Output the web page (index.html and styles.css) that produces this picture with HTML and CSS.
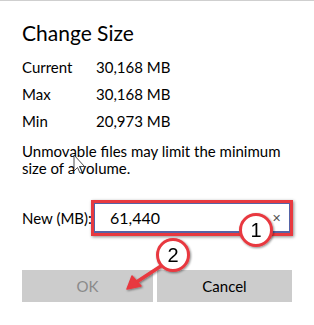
FILE: index.html
```html
<!DOCTYPE html>
<html lang="en">
<head>
    <meta charset="UTF-8">
    <meta name="viewport" content="width=device-width, initial-scale=1.0">
    <title>Change Size</title>
    <link rel="stylesheet" href="styles.css">
</head>
<body>
    <div class="dialog">
        <h2 class="title">Change Size</h2>
        <div class="info">
            <div class="row"><span class="label">Current</span><span>30,168 MB</span></div>
            <div class="row"><span class="label">Max</span><span>30,168 MB</span></div>
            <div class="row"><span class="label">Min</span><span>20,973 MB</span></div>
        </div>
        <p class="note">Unmovable files may limit the minimum size of a volume.</p>
        <div class="field">
            <label class="field-label">New (MB):</label>
            <div class="mark">
                <div class="input">
                    <span class="value">61,440</span>
                    <span class="clear">&#x2715;</span>
                </div>
            </div>
        </div>
        <div class="footer">
            <button class="button disabled">OK</button>
            <button class="button">Cancel</button>
        </div>
    </div>

    <svg class="notes" width="314" height="325" viewBox="0 0 314 325">
        <defs>
            <filter id="shadow" x="-30%" y="-30%" width="160%" height="160%">
                <feDropShadow dx="1" dy="1" stdDeviation="1.2" flood-color="#000" flood-opacity="0.45"/>
            </filter>
        </defs>
        <!-- mouse pointer -->
        <path d="M74 155 L74 171 L77.5 167.5 L80 173 L82 172 L79.5 166.5 L84.5 166.5 Z" fill="#fff" stroke="#222" stroke-width="0.8"/>
        <g filter="url(#shadow)">
            <circle cx="256" cy="230" r="15.5" fill="#fff" stroke="#e8393f" stroke-width="3"/>
            <text x="256" y="237" text-anchor="middle" class="num">1</text>
            <line x1="161" y1="266" x2="135" y2="283" stroke="#e8393f" stroke-width="3.5" stroke-linecap="round"/>
            <path d="M127 289 L132 276 L141 286 Z" fill="#e8393f" stroke="#e8393f" stroke-width="1.5" stroke-linejoin="round"/>
            <circle cx="173" cy="255" r="15.5" fill="#fff" stroke="#e8393f" stroke-width="3"/>
            <text x="173" y="262" text-anchor="middle" class="num">2</text>
        </g>
    </svg>
</body>
</html>
```

FILE: styles.css
```css
body {
    margin: 0;
    background-color: #fff;
    font-family: Lato, "Noto Sans", sans-serif;
    color: #000;
}
.dialog {
    border-top: 1px solid #cfcfcf;
    padding: 18px 22px 0;
    height: 306px;
}
.title {
    margin: 0;
    font-size: 21px;
    font-weight: 400;
    line-height: 28px;
}
.info {
    margin-top: 7px;
}
.row {
    display: flex;
    font-size: 15px;
    line-height: 27px;
}
.row .label {
    width: 74px;
}
.note {
    margin: 8px 0 0;
    font-size: 15px;
    line-height: 17px;
    width: 260px;
}
.field {
    display: flex;
    align-items: center;
    margin-top: 23px;
}
.field-label {
    font-size: 15px;
    width: 69px;
    white-space: nowrap;
}
.mark {
    border: 3px solid #e8393f;
    box-shadow: 1px 1px 3px rgba(0, 0, 0, 0.45);
}
.input {
    display: flex;
    align-items: center;
    width: 179px;
    height: 27px;
    border: 1px solid #5563a6;
    border-bottom-width: 2px;
    padding-left: 15px;
    background-color: #fff;
}
.input .value {
    font-size: 16px;
}
.input .clear {
    margin-left: auto;
    margin-right: 8px;
    font-size: 11px;
    color: #555;
}
.footer {
    display: grid;
    grid-template-columns: 131px 135px;
    gap: 4px;
    margin-top: 34px;
}
.button {
    height: 32px;
    border: 0;
    background-color: #cccccc;
    font-family: inherit;
    font-size: 15px;
    color: #000;
}
.button.disabled {
    color: #8a8a8a;
}
.notes {
    position: absolute;
    top: 0;
    left: 0;
    pointer-events: none;
}
.notes .num {
    font-family: "Liberation Sans", sans-serif;
    font-size: 20px;
    fill: #000;
}
```
